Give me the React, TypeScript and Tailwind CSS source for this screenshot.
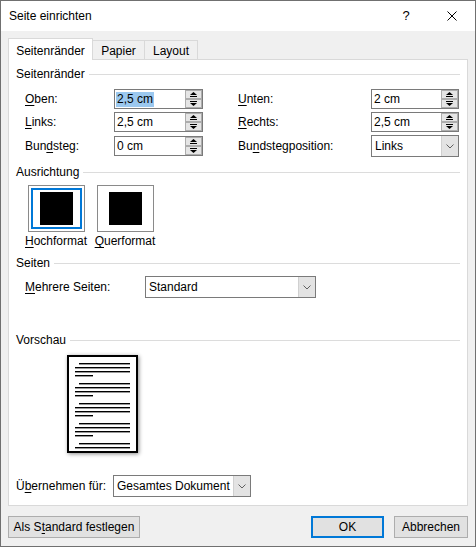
import React from 'react';

function Acc({ text, at }: { text: string; at: number }) {
  return (
    <>
      {text.slice(0, at)}
      <span className="underline decoration-1 underline-offset-[2px]">{text[at]}</span>
      {text.slice(at + 1)}
    </>
  );
}

function Heading({ title, className = '' }: { title: string; className?: string }) {
  return (
    <div className={`flex items-start h-4 ${className}`}>
      <span className="leading-4">{title}</span>
      <div className="ml-[4px] mt-[8px] h-px flex-1 bg-[#dcdcdc]" />
    </div>
  );
}

function SpinButton({ up }: { up?: boolean }) {
  return (
    <div className="flex h-[9px] items-center justify-center border border-[#adadad] bg-[#e5e5e5]">
      <svg width="7" height="5" viewBox="0 0 7 5">
        {up ? (
          <>
            <polygon points="3.5,0 7,3 0,3" fill="#000" />
            <rect x="0" y="4" width="7" height="1" fill="#000" />
          </>
        ) : (
          <>
            <rect x="0" y="0" width="7" height="1" fill="#000" />
            <polygon points="0,2 7,2 3.5,5" fill="#000" />
          </>
        )}
      </svg>
    </div>
  );
}

function Spin({ value, width, selected }: { value: string; width: string; selected?: boolean }) {
  return (
    <div className={`flex h-[20px] border border-[#7a7a7a] bg-white ${width}`}>
      <div className="flex flex-1 items-center pl-[1px]">
        <span className={`px-[1px] leading-[15px] ${selected ? 'bg-[#9bc8ef]' : ''}`}>{value}</span>
      </div>
      <div className="flex w-[17px] flex-col">
        <SpinButton up />
        <SpinButton />
      </div>
    </div>
  );
}

function Drop({ value, width }: { value: string; width: string }) {
  return (
    <div className={`flex h-[22px] border border-[#7a7a7a] bg-white ${width}`}>
      <div className="flex flex-1 items-center pl-[3px] whitespace-nowrap">{value}</div>
      <div className="flex w-[17px] items-center justify-center border-l border-[#d0d0d0] bg-[#e3e3e3]">
        <svg width="8" height="5" viewBox="0 0 8 5">
          <polyline points="0.5,0.5 4,4 7.5,0.5" fill="none" stroke="#606060" strokeWidth="1" />
        </svg>
      </div>
    </div>
  );
}

function Orientation({ label, at, selected, width }: { label: string; at: number; selected?: boolean; width: string }) {
  return (
    <div className={`flex flex-col items-center ${width}`}>
      <div className="h-[47px] w-[57px] border border-[#8a8a8a] p-[2px]">
        <div
          className={`flex h-full w-full items-center justify-center border-2 ${
            selected ? 'border-[#0078d7]' : 'border-transparent'
          }`}
        >
          <div className="h-[33px] w-[33px] bg-black" />
        </div>
      </div>
      <span className="mt-[1px] whitespace-nowrap leading-4">
        <Acc text={label} at={at} />
      </span>
    </div>
  );
}

function PreviewPage() {
  const lines: { x1: number; x2: number; y: number }[] = [];
  for (let p = 0; p < 5; p++) {
    const base = 6 + p * 20;
    lines.push({ x1: 10, x2: 61, y: base });
    lines.push({ x1: 6, x2: 61, y: base + 4 });
    lines.push({ x1: 6, x2: 61, y: base + 8 });
    lines.push({ x1: 6, x2: 24, y: base + 12 });
  }
  return (
    <div className="h-[98px] w-[71px] border-2 border-black bg-white shadow-[1px_1px_4px_rgba(0,0,0,0.45)]">
      <svg width="67" height="94" viewBox="0 0 67 94" className="block">
        {lines.map((l, i) => (
          <rect key={i} x={l.x1} y={l.y} width={l.x2 - l.x1} height={1.4} fill="#000" />
        ))}
      </svg>
    </div>
  );
}

export default function App() {
  return (
    <div className="flex h-[547px] w-[476px] flex-col border border-[#707070] bg-[#f0f0f0] text-[12px] text-black font-['Liberation_Sans',Arial,sans-serif]">
      {/* Title bar */}
      <div className="flex h-[30px] items-center bg-white pl-[8px]">
        <span>Seite einrichten</span>
        <div className="flex-1" />
        <div className="flex h-full w-[46px] items-center justify-center text-[13px]">?</div>
        <div className="flex h-full w-[46px] items-center justify-center">
          <svg width="10" height="10" viewBox="0 0 10 10">
            <path d="M0.5 0.5 L9.5 9.5 M9.5 0.5 L0.5 9.5" stroke="#000" strokeWidth="1" />
          </svg>
        </div>
      </div>

      <div className="flex flex-1 flex-col px-[7px] pt-[7px]">
        {/* Tabs */}
        <div className="flex h-[21px] items-end">
          <div className="relative z-10 -mb-px flex h-[22px] w-[85px] justify-center border-x border-t border-[#d9d9d9] bg-white pt-[4px] leading-4">
            Seitenränder
          </div>
          <div className="flex h-[19px] w-[52px] justify-center border-r border-t border-[#d9d9d9] pt-[2px] leading-4">
            Papier
          </div>
          <div className="flex h-[19px] w-[53px] justify-center border-r border-t border-[#d9d9d9] pt-[2px] leading-4">
            Layout
          </div>
        </div>

        {/* Panel */}
        <div className="flex h-[447px] flex-col border border-[#d9d9d9] bg-white px-[7px]">
          <Heading title="Seitenränder" className="mt-[6px]" />

          <div className="mt-[7px] flex flex-col gap-[3px] pl-[9px]">
            <div className="flex h-[20px] items-center">
              <span className="w-[89px]"><Acc text="Oben:" at={0} /></span>
              <Spin value="2,5 cm" width="w-[89px]" selected />
              <div className="w-[35px]" />
              <span className="w-[133px]"><Acc text="Unten:" at={0} /></span>
              <Spin value="2 cm" width="w-[88px]" />
            </div>
            <div className="flex h-[20px] items-center">
              <span className="w-[89px]"><Acc text="Links:" at={0} /></span>
              <Spin value="2,5 cm" width="w-[89px]" />
              <div className="w-[35px]" />
              <span className="w-[133px]"><Acc text="Rechts:" at={0} /></span>
              <Spin value="2,5 cm" width="w-[88px]" />
            </div>
            <div className="flex h-[22px] items-center">
              <span className="w-[89px]"><Acc text="Bundsteg:" at={3} /></span>
              <Spin value="0 cm" width="w-[89px]" />
              <div className="w-[35px]" />
              <span className="w-[133px]"><Acc text="Bundstegposition:" at={2} /></span>
              <Drop value="Links" width="w-[88px]" />
            </div>
          </div>

          <Heading title="Ausrichtung" className="mt-[7px]" />
          <div className="mt-[5px] flex gap-[8px] pl-[9px]">
            <Orientation label="Hochformat" at={0} selected width="w-[62px]" />
            <Orientation label="Querformat" at={0} width="w-[60px]" />
          </div>

          <Heading title="Seiten" className="mt-[6px]" />
          <div className="mt-[5px] flex h-[22px] items-center pl-[9px]">
            <span className="w-[120px]"><Acc text="Mehrere Seiten:" at={0} /></span>
            <Drop value="Standard" width="w-[171px]" />
          </div>

          <Heading title="Vorschau" className="mt-[34px]" />
          <div className="mt-[7px] pl-[51px]">
            <PreviewPage />
          </div>

          <div className="mt-[22px] flex h-[22px] items-center">
            <span className="w-[97px]"><Acc text="Übernehmen für:" at={1} /></span>
            <Drop value="Gesamtes Dokument" width="w-[138px]" />
          </div>
        </div>

        {/* Buttons */}
        <div className="mt-[10px] flex h-[22px]">
          <button className="flex w-[132px] items-center justify-center border border-[#adadad] bg-[#e1e1e1]">
            <span><Acc text="Als Standard festlegen" at={5} /></span>
          </button>
          <div className="flex-1" />
          <button className="flex w-[73px] items-center justify-center border-2 border-[#0078d7] bg-[#e1e1e1]">
            OK
          </button>
          <button className="ml-[10px] flex w-[74px] items-center justify-center border border-[#adadad] bg-[#e1e1e1]">
            Abbrechen
          </button>
        </div>
      </div>
    </div>
  );
}
